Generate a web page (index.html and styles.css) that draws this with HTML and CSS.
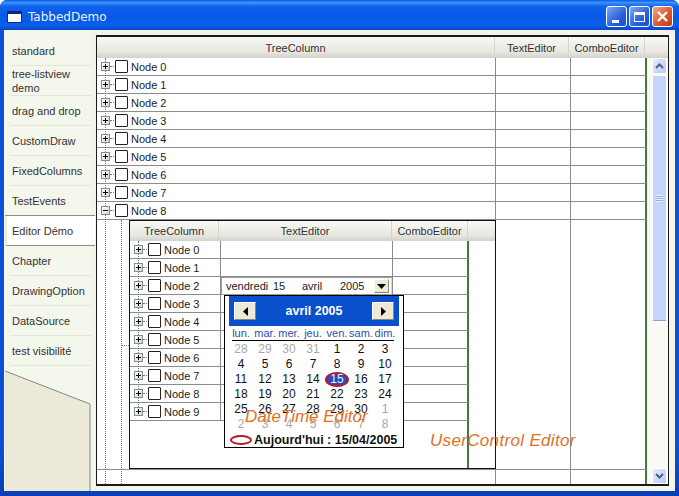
FILE: index.html

```html
<!DOCTYPE html>
<html lang="fr">
<head>
  <meta charset="UTF-8" />
  <title>TabbedDemo</title>
  <link rel="stylesheet" href="styles.css">
</head>
<body>
  <div class="window">
    <div class="titlebar">
      <span class="app-icon"></span>
      <span class="title">TabbedDemo</span>
      <span class="win-btn min"></span>
      <span class="win-btn max"></span>
      <span class="win-btn close">
        <svg width="15" height="15" viewBox="0 0 15 15"><path d="M3 3l9 9M12 3l-9 9" stroke="#fff" stroke-width="2.4" fill="none"/></svg>
      </span>
    </div>

    <div class="client">
      <div class="tabs">
        <div class="tab">standard</div>
        <div class="tab">tree-listview demo</div>
        <div class="tab">drag and drop</div>
        <div class="tab">CustomDraw</div>
        <div class="tab">FixedColumns</div>
        <div class="tab">TestEvents</div>
        <div class="tab active">Editor Démo</div>
        <div class="tab">Chapter</div>
        <div class="tab">DrawingOption</div>
        <div class="tab">DataSource</div>
        <div class="tab">test visibilité</div>
        <svg class="tabs-end" width="86" height="125" viewBox="0 0 86 125">
          <path d="M0 5L85 38V125H0Z" fill="#ece9d8"/>
          <path d="M0 5L85 38V125" fill="none" stroke="#7d8a8c"/>
        </svg>
      </div>

      <div class="panel">
        <div class="head">
          <div class="hcell">TreeColumn</div>
          <div class="hcell">TextEditor</div>
          <div class="hcell">ComboEditor</div>
          <div class="hcell"></div>
        </div>

        <div class="tree-body">
          <div class="rows">
            <div class="row"><div class="cell node"><i class="exp plus"></i><i class="chk"></i>Node 0</div><div class="cell"></div><div class="cell"></div></div>
            <div class="row"><div class="cell node"><i class="exp plus"></i><i class="chk"></i>Node 1</div><div class="cell"></div><div class="cell"></div></div>
            <div class="row"><div class="cell node"><i class="exp plus"></i><i class="chk"></i>Node 2</div><div class="cell"></div><div class="cell"></div></div>
            <div class="row"><div class="cell node"><i class="exp plus"></i><i class="chk"></i>Node 3</div><div class="cell"></div><div class="cell"></div></div>
            <div class="row"><div class="cell node"><i class="exp plus"></i><i class="chk"></i>Node 4</div><div class="cell"></div><div class="cell"></div></div>
            <div class="row"><div class="cell node"><i class="exp plus"></i><i class="chk"></i>Node 5</div><div class="cell"></div><div class="cell"></div></div>
            <div class="row"><div class="cell node"><i class="exp plus"></i><i class="chk"></i>Node 6</div><div class="cell"></div><div class="cell"></div></div>
            <div class="row"><div class="cell node"><i class="exp plus"></i><i class="chk"></i>Node 7</div><div class="cell"></div><div class="cell"></div></div>
            <div class="row"><div class="cell node"><i class="exp"></i><i class="chk"></i>Node 8</div><div class="cell"></div><div class="cell"></div></div>

            <div class="row detail">
              <div class="cell">
                <div class="subtree">
                  <div class="head">
                    <div class="hcell">TreeColumn</div>
                    <div class="hcell">TextEditor</div>
                    <div class="hcell">ComboEditor</div>
                    <div class="hcell"></div>
                  </div>
                  <div class="row"><div class="cell node"><i class="exp plus"></i><i class="chk"></i>Node 0</div><div class="cell"></div><div class="cell"></div></div>
                  <div class="row"><div class="cell node"><i class="exp plus"></i><i class="chk"></i>Node 1</div><div class="cell"></div><div class="cell"></div></div>
                  <div class="row"><div class="cell node"><i class="exp plus"></i><i class="chk"></i>Node 2</div><div class="cell"></div><div class="cell"></div></div>
                  <div class="row"><div class="cell node"><i class="exp plus"></i><i class="chk"></i>Node 3</div><div class="cell"></div><div class="cell"></div></div>
                  <div class="row"><div class="cell node"><i class="exp plus"></i><i class="chk"></i>Node 4</div><div class="cell"></div><div class="cell"></div></div>
                  <div class="row"><div class="cell node"><i class="exp plus"></i><i class="chk"></i>Node 5</div><div class="cell"></div><div class="cell"></div></div>
                  <div class="row"><div class="cell node"><i class="exp plus"></i><i class="chk"></i>Node 6</div><div class="cell"></div><div class="cell"></div></div>
                  <div class="row"><div class="cell node"><i class="exp plus"></i><i class="chk"></i>Node 7</div><div class="cell"></div><div class="cell"></div></div>
                  <div class="row"><div class="cell node"><i class="exp plus"></i><i class="chk"></i>Node 8</div><div class="cell"></div><div class="cell"></div></div>
                  <div class="row"><div class="cell node"><i class="exp plus"></i><i class="chk"></i>Node 9</div><div class="cell"></div><div class="cell"></div></div>
                  <div class="sub-fill"></div>
                  <span class="tree-line sub-line"></span>
                </div>
              </div>
              <div class="cell"></div>
              <div class="cell"></div>
            </div>
            <div class="row last"><div class="cell"></div><div class="cell"></div><div class="cell"></div></div>
          </div>

          <div class="scrollbar">
            <span class="sb-btn"><svg width="9" height="6" viewBox="0 0 9 6"><path d="M1 5l3.5-3.5L8 5" fill="none" stroke="#4d6185" stroke-width="2"/></svg></span>
            <span class="sb-thumb"><i></i></span>
            <span class="sb-track"></span>
            <span class="sb-btn"><svg width="9" height="6" viewBox="0 0 9 6"><path d="M1 1l3.5 3.5L8 1" fill="none" stroke="#4d6185" stroke-width="2"/></svg></span>
          </div>
        </div>

        <span class="tree-line line-a"></span>
        <span class="tree-line line-b"></span>
        <span class="tree-tick"></span>

        <div class="combo">
          <span class="combo-part w1">vendredi</span>
          <span class="combo-part w2">15</span>
          <span class="combo-part w3">avril</span>
          <span class="combo-part w4">2005</span>
          <span class="combo-btn"><svg width="9" height="5" viewBox="0 0 9 5"><path d="M0 0H9L4.5 5Z" fill="#000"/></svg></span>
        </div>

        <div class="calendar">
          <div class="cal-head">
            <span class="cal-btn"><svg width="5" height="9" viewBox="0 0 5 9"><path d="M5 0V9L0 4.5Z" fill="#000"/></svg></span>
            <span class="cal-title">avril 2005</span>
            <span class="cal-btn"><svg width="5" height="9" viewBox="0 0 5 9"><path d="M0 0V9L5 4.5Z" fill="#000"/></svg></span>
          </div>
          <div class="cal-names">
            <span>lun.</span><span>mar.</span><span>mer.</span><span>jeu.</span><span>ven.</span><span>sam.</span><span>dim.</span>
          </div>
          <div class="cal-days">
            <span class="off">28</span><span class="off">29</span><span class="off">30</span><span class="off">31</span><span>1</span><span>2</span><span>3</span>
            <span>4</span><span>5</span><span>6</span><span>7</span><span>8</span><span>9</span><span>10</span>
            <span>11</span><span>12</span><span>13</span><span>14</span><span class="today">15</span><span>16</span><span>17</span>
            <span>18</span><span>19</span><span>20</span><span>21</span><span>22</span><span>23</span><span>24</span>
            <span>25</span><span>26</span><span>27</span><span>28</span><span>29</span><span>30</span><span class="off">1</span>
            <span class="off">2</span><span class="off">3</span><span class="off">4</span><span class="off">5</span><span class="off">6</span><span class="off">7</span><span class="off">8</span>
          </div>
          <div class="cal-foot"><i class="ring"></i>Aujourd'hui : 15/04/2005</div>
        </div>

        <span class="note note-date">DateTime Editor</span>
        <span class="note note-user">UserControl Editor</span>
      </div>
    </div>
  </div>
</body>
</html>
```

FILE: styles.css

```css
html, body {
  margin: 0;
  padding: 0;
  height: 100%;
  overflow: hidden;
  background: #fff;
  font-family: "Liberation Sans", Arial, sans-serif;
  font-size: 11px;
  color: #1c1c1c;
}

.window {
  width: 679px;
  height: 496px;
  display: flex;
  flex-direction: column;
  background: linear-gradient(to bottom, #0a50d8 90%, #0a3fb4);
  border-radius: 7px 7px 0 0;
  overflow: hidden;
}

/* title bar */
.titlebar {
  height: 30px;
  flex: none;
  box-sizing: border-box;
  display: flex;
  align-items: center;
  padding: 3px 6px 0 7px;
  background: linear-gradient(to bottom, #0a58e0 0%, #3d93fb 8%, #0f62ea 22%, #0758e6 55%, #0a5fee 85%, #0746c4 100%);
}

.app-icon {
  width: 15px;
  height: 12px;
  box-sizing: border-box;
  background: #fff;
  border: 1px solid #0c2a7a;
  border-top-width: 3px;
  margin-right: 6px;
}

.title {
  flex: 1;
  color: #fff;
  font-family: "DejaVu Sans", sans-serif;
  font-size: 12px;
  opacity: 0.92;
}

.win-btn {
  width: 21px;
  height: 21px;
  box-sizing: border-box;
  margin-left: 2px;
  border: 1px solid #fff;
  border-radius: 3px;
  background: linear-gradient(135deg, #7fa8f5, #2a5fdc 60%, #1f4dc6);
  display: flex;
  align-items: center;
  justify-content: center;
}

.win-btn.min::after {
  content: "";
  width: 7px;
  height: 3px;
  background: #fff;
  margin-top: 9px;
  margin-right: 3px;
}

.win-btn.max::after {
  content: "";
  width: 11px;
  height: 10px;
  box-sizing: border-box;
  border: 1px solid #fff;
  border-top-width: 3px;
}

.win-btn.close {
  background: linear-gradient(135deg, #f0a890, #dc5a30 55%, #c23c18);
}

/* client area */
.client {
  flex: 1;
  min-height: 0;
  display: flex;
  margin: 0 4px 5px 4px;
  background: #f3f5ea;
}

.tabs {
  width: 87px;
  flex: none;
  box-sizing: border-box;
  display: flex;
  flex-direction: column;
  padding: 6px 0 0 1px;
  background: #f4f7ec;
  border-radius: 6px 0 0 0;
}

.tab {
  height: 30px;
  flex: none;
  box-sizing: border-box;
  display: flex;
  align-items: center;
  margin-left: 5px;
  padding: 0 4px 0 2px;
  line-height: 14px;
  border-bottom: 1px solid #e3e6da;
  color: #333;
}

.tab.active {
  background: #fff;
  margin-left: 0;
  margin-right: -4px;
  padding-left: 5px;
  border-left: 2px solid #ece9d8;
  border-bottom-color: #8c8c84;
  box-shadow: 0 -1px 0 #8c8c84;
  position: relative;
  z-index: 1;
}

.tabs-end {
  display: block;
  flex: none;
}

.panel {
  flex: 1;
  min-width: 0;
  height: 451px;
  margin: 5px 6px 0 5px;
  box-sizing: border-box;
  border: solid #1a1a1a;
  border-width: 2px 1px 2px 1px;
  background: #fff;
  position: relative;
  display: flex;
  flex-direction: column;
}

.tree-body {
  flex: 1;
  min-height: 0;
  display: flex;
}

.rows {
  width: 550px;
  flex: none;
  display: flex;
  flex-direction: column;
}

/* header and rows, outer list */
.head {
  display: grid;
  grid-template-columns: 398px 74px 76px 1fr;
  height: 21px;
  flex: none;
  background: linear-gradient(to bottom, #f8f8f4, #e8e8e2 70%, #d2d2ca);
}

.hcell {
  display: flex;
  align-items: center;
  justify-content: center;
  border-right: 1px solid #d6d6ce;
  color: #333;
}

.hcell:last-child {
  border-right: none;
}

.row {
  display: grid;
  grid-template-columns: 399px 75px 1fr;
  height: 18px;
  flex: none;
  box-sizing: border-box;
  border-bottom: 1px solid #8c8c8c;
  border-right: 2px solid #3f7a40;
}

.cell {
  border-right: 1px solid #8c8c8c;
  min-width: 0;
}

.row .cell:nth-child(3) {
  border-right: none;
}

.node {
  display: flex;
  align-items: center;
  padding-left: 4px;
  color: #1c1c1c;
}

/* expander box: minus by default, plus with .plus */
.exp {
  width: 9px;
  height: 9px;
  box-sizing: border-box;
  flex: none;
  border: 1px solid #7f8f90;
  background: linear-gradient(#000, #000) center / 5px 1px no-repeat, linear-gradient(135deg, #fff, #d8d8ce);
  margin-right: 5px;
  position: relative;
  z-index: 1;
}

.exp.plus {
  background: linear-gradient(#000, #000) center / 5px 1px no-repeat, linear-gradient(#000, #000) center / 1px 5px no-repeat, linear-gradient(135deg, #fff, #d8d8ce);
}

.exp::after {
  content: "";
  position: absolute;
  left: 8px;
  top: 3px;
  width: 4px;
  border-top: 1px dotted #777;
}

.chk {
  width: 13px;
  height: 13px;
  box-sizing: border-box;
  flex: none;
  border: 1px solid #222;
  border-radius: 1px;
  background: #fff;
  margin-right: 3px;
}

.row.detail {
  height: 250px;
}

.row.last {
  flex: 1;
  height: auto;
  border-bottom: none;
}

/* nested editor */
.subtree {
  margin-left: 32px;
  margin-right: -1px;
  height: 249px;
  box-sizing: border-box;
  border: 1px solid #111;
  background: #fff;
  position: relative;
  display: flex;
  flex-direction: column;
}

.subtree .head {
  grid-template-columns: 89px 173px 76px 1fr;
  height: 20px;
}

.subtree .row {
  grid-template-columns: 91px 172px 1fr;
  width: 339px;
}

.sub-fill {
  flex: 1;
  width: 339px;
  box-sizing: border-box;
  border-right: 2px solid #3f7a40;
}

.tree-line {
  position: absolute;
  width: 0;
  border-left: 1px dotted #777;
}

.line-a {
  left: 8px;
  top: 21px;
  bottom: 0;
}

.line-b {
  left: 24px;
  top: 183px;
  bottom: 0;
}

.tree-tick {
  position: absolute;
  left: 24px;
  top: 308px;
  width: 8px;
  border-top: 1px dotted #777;
}

.sub-line {
  left: 8px;
  top: 20px;
  height: 172px;
}

/* open date picker */
.combo {
  position: absolute;
  left: 124px;
  top: 240px;
  width: 171px;
  height: 18px;
  box-sizing: border-box;
  background: #fff;
  border: 1px solid #9a9a9a;
  border-right-color: #d8d8d0;
  z-index: 2;
}

.combo-part {
  position: absolute;
  top: 2px;
  color: #222;
}

.w1 { left: 4px; }
.w2 { left: 51px; }
.w3 { left: 80px; }
.w4 { left: 118px; }

.combo-btn {
  position: absolute;
  right: 2px;
  top: 1px;
  width: 15px;
  height: 14px;
  display: flex;
  align-items: center;
  justify-content: center;
  background: #ece9d8;
  border: 1px solid;
  border-color: #fff #8a8878 #8a8878 #fff;
  box-sizing: border-box;
}

.calendar {
  position: absolute;
  left: 127px;
  top: 258px;
  width: 180px;
  height: 153px;
  box-sizing: border-box;
  background: #fff;
  border: 1px solid #000;
  padding: 0 4px;
  z-index: 2;
}

.cal-head {
  height: 30px;
  background: #0a4fcb;
  display: flex;
  align-items: center;
  justify-content: space-between;
  padding: 0 5px;
}

.cal-title {
  color: #fff;
  font-weight: bold;
  font-size: 12.5px;
}

.cal-btn {
  width: 22px;
  height: 18px;
  box-sizing: border-box;
  display: flex;
  align-items: center;
  justify-content: center;
  background: #ece9d8;
  border: 1px solid;
  border-color: #fff #8a8878 #8a8878 #fff;
}

.cal-names, .cal-days {
  display: grid;
  grid-template-columns: repeat(7, 24px);
  text-align: center;
}

.cal-names {
  height: 15px;
  line-height: 15px;
  color: #2a4fa8;
  background: linear-gradient(#000, #000) 3px 100% / 162px 1px no-repeat;
  font-size: 11px;
}

.cal-days {
  grid-auto-rows: 15px;
  line-height: 15px;
  margin-top: 1px;
  font-size: 12px;
  color: #111;
}

.off {
  color: #a8a8a8;
}

.today {
  color: #e6edff;
  background: #2a4db8;
  border: 2px solid #b01c28;
  border-radius: 50%;
  box-sizing: border-box;
  line-height: 11px;
}

.cal-foot {
  display: flex;
  align-items: center;
  height: 15px;
  font-weight: bold;
  font-size: 12.5px;
  white-space: nowrap;
  color: #111;
}

.ring {
  width: 22px;
  height: 10px;
  border: 2px solid #b01c28;
  border-radius: 50%;
  box-sizing: border-box;
  margin: 0 2px 0 1px;
  flex: none;
}

/* orange captions over the list */
.note {
  position: absolute;
  color: #e0701e;
  font-style: italic;
  font-size: 17px;
  line-height: 18px;
  white-space: nowrap;
  z-index: 3;
}

.note-date {
  left: 148px;
  top: 371px;
}

.note-user {
  left: 333px;
  top: 395px;
  letter-spacing: 0.33px;
}

/* scroll bar */
.scrollbar {
  flex: 1;
  box-sizing: border-box;
  display: flex;
  flex-direction: column;
  padding: 0 1px 0 5px;
  background: #fbf9f4;
}

.sb-btn {
  height: 16px;
  flex: none;
  border: 1px solid #fff;
  border-radius: 2px;
  box-sizing: border-box;
  background: linear-gradient(135deg, #e2ebfe, #b8cbfa);
  display: flex;
  align-items: center;
  justify-content: center;
}

.sb-thumb {
  height: 246px;
  flex: none;
  margin-top: 1px;
  box-sizing: border-box;
  border: 1px solid #fff;
  border-bottom-color: #8fa2c8;
  border-radius: 2px;
  background: #c3d5fd;
  display: flex;
  align-items: center;
  justify-content: center;
}

.sb-thumb i {
  width: 7px;
  height: 7px;
  background: repeating-linear-gradient(to bottom, #eef3ff 0 1px, #8fa9e0 1px 2px);
}

.sb-track {
  flex: 1;
}
```
